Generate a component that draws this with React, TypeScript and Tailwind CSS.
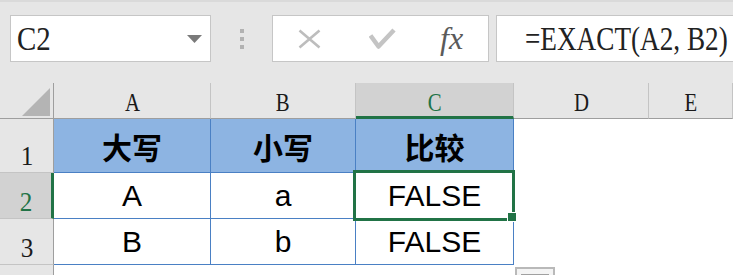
import React from 'react';

const serif = "font-['Liberation_Serif','Times_New_Roman',serif]";
const sans = "font-['Liberation_Sans',Arial,sans-serif]";
const cjk = "font-['Noto_Sans_CJK_SC','Noto_Sans',sans-serif]";

const cols = ['A', 'B', 'C', 'D', 'E'];

function ColHead({ label, i }: { label: string; i: number }) {
  const active = label === 'C';
  const cls = active
    ? 'bg-[#d2d2d2] border-b-[3px] border-b-[#217346] text-[#217346]'
    : 'bg-[#e6e6e6] border-b border-b-[#9e9e9e] text-[#1a1a1a]';
  return (
    <div className={`flex items-end justify-center border-r border-r-[#c4c4c4] ${cls}`}>
      <span className={`${serif} inline-block text-[26px] leading-none scale-x-[0.8] ${active ? 'pb-0' : 'pb-[2px]'}`}>{label}</span>
    </div>
  );
}

function RowHead({ n }: { n: number }) {
  const active = n === 2;
  const cls = active
    ? 'bg-[#d2d2d2] border-r-[3px] border-r-[#217346] text-[#217346]'
    : 'bg-[#e6e6e6] border-r border-r-[#9e9e9e] text-[#1a1a1a]';
  return (
    <div className={`flex items-end justify-center border-b border-b-[#c4c4c4] pb-[2px] ${cls}`}>
      <span className={`${serif} inline-block text-[28px] leading-none scale-x-[0.9]`}>{n}</span>
    </div>
  );
}

function Cell({ text, head }: { text: string; head?: boolean }) {
  return (
    <div
      className={`flex items-center justify-center border-r border-b border-[#4a80c4] ${
        head ? `bg-[#8db4e2] ${cjk} font-bold text-[30px]` : `bg-white ${sans} text-[30px]`
      } text-black leading-none`}
    >
      {text}
    </div>
  );
}

const rows = [
  ['大写', '小写', '比较'],
  ['A', 'a', 'FALSE'],
  ['B', 'b', 'FALSE'],
];

export default function App() {
  return (
    <div className="relative w-[733px] h-[275px] overflow-hidden bg-[#e6e6e6]">
      <div className="h-[2px] bg-[#dadada]" />
      {/* formula bar */}
      <div className="flex items-start h-[81px] pl-[10px] pt-[13px]">
        <div className="flex items-center justify-between w-[201px] h-[47px] shrink-0 border border-[#c6c6c6] bg-white pl-[6px] pr-[8px]">
          <span className={`${serif} inline-block origin-left text-[34px] leading-none text-[#222] scale-x-[0.85]`}>C2</span>
          <svg width="15" height="8" viewBox="0 0 15 8">
            <polygon points="0,0 15,0 7.5,8" fill="#7a7a7a" />
          </svg>
        </div>
        <div className="flex flex-col gap-[4px] ml-[29px] mt-[14px] shrink-0">
          <div className="w-[4px] h-[4px] bg-[#b2b2b2]" />
          <div className="w-[4px] h-[4px] bg-[#b2b2b2]" />
          <div className="w-[4px] h-[4px] bg-[#b2b2b2]" />
        </div>
        <div className="flex items-center w-[217px] h-[47px] shrink-0 ml-[28px] border border-[#c6c6c6] bg-white">
          <svg className="ml-[25px]" width="23" height="20" viewBox="0 0 23 20">
            <path d="M1.5 1.5 L21.5 18.5 M21.5 1.5 L1.5 18.5" stroke="#bdbdbd" strokeWidth="2.6" fill="none" />
          </svg>
          <svg className="ml-[48px]" width="27" height="22" viewBox="0 0 27 22">
            <polyline points="1.5,7.5 9.5,18.5 25,2" stroke="#c4c4c4" strokeWidth="4.5" fill="none" strokeLinejoin="round" />
          </svg>
          <span className={`${serif} ml-[44px] italic text-[32px] leading-none text-[#5a5a5a] -mt-[2px]`}>fx</span>
        </div>
        <div className="flex items-center h-[47px] w-[260px] shrink-0 ml-[7px] border border-[#c6c6c6] bg-white pl-[28px]">
          <span className={`${serif} inline-block origin-left whitespace-nowrap text-[34px] leading-none text-[#222] scale-x-[0.8]`}>
            =EXACT(A2, B2)
          </span>
        </div>
      </div>

      {/* sheet */}
      <div className="grid grid-cols-[54px_157px_145px_158px_135px_1fr] grid-rows-[36px_54px_46px_46px_10px]">
        <div className="flex items-end justify-end bg-[#e6e6e6] border-r border-r-[#9e9e9e] border-b border-b-[#9e9e9e] pr-[3px] pb-[2px]">
          <svg width="28" height="28" viewBox="0 0 28 28">
            <polygon points="28,0 28,28 0,28" fill="#b4b4b4" />
          </svg>
        </div>
        {cols.map((c, i) => (
          <ColHead key={c} label={c} i={i} />
        ))}

        {rows.map((r, ri) => (
          <React.Fragment key={ri}>
            <RowHead n={ri + 1} />
            {r.map((t, ci) => (
              <Cell key={ci} text={t} head={ri === 0} />
            ))}
            <div className="bg-white" />
            <div className="bg-white" />
          </React.Fragment>
        ))}

        <div className="bg-[#e6e6e6] border-r border-r-[#9e9e9e]" />
        <div className="bg-white col-span-5" />
      </div>

      {/* active cell selection */}
      <div className="absolute left-[353px] top-[170px] w-[162px] h-[51px] border-[3px] border-[#217346]" />
      <div className="absolute left-[507px] top-[212px] w-[10px] h-[10px] bg-[#217346] border border-white" />

      {/* paste options */}
      <div className="absolute left-[515px] top-[267px] w-[40px] h-[14px] border-2 border-[#b9b9b9] bg-[#f4f4f4]">
        <div className="absolute left-[4px] top-[5px] w-[28px] h-[2px] bg-[#a0a0a0]" />
      </div>
    </div>
  );
}
